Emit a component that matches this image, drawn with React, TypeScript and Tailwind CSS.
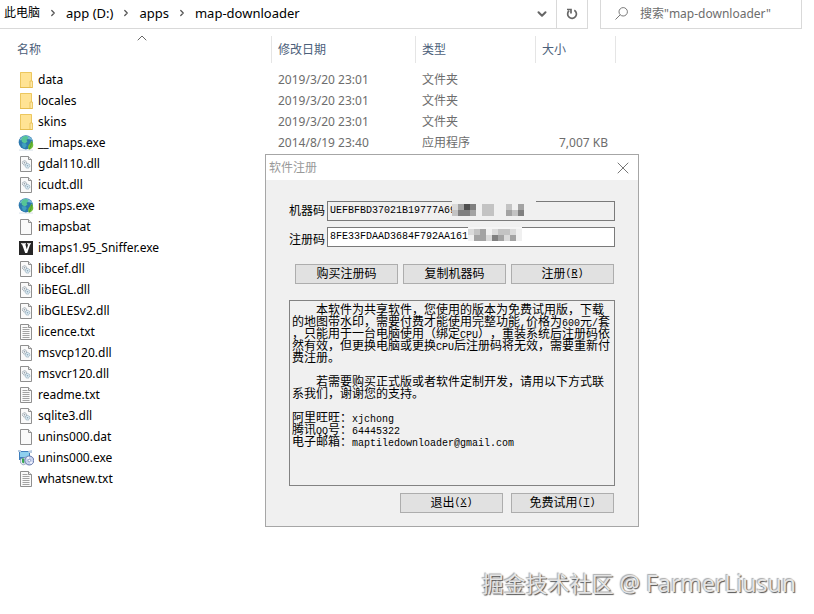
import { Fragment, type ReactNode } from "react";
import { ChevronDown, ChevronRight, ChevronUp, X } from "lucide-react";

type Kind = "folder" | "globe" | "dll" | "blank" | "text" | "sniffer" | "setup";

type FileRow = {
    name: string;
    kind: Kind;
    date?: string;
    type?: string;
    size?: string;
};

const files: FileRow[] = [
    { name: "data", kind: "folder", date: "2019/3/20 23:01", type: "文件夹" },
    { name: "locales", kind: "folder", date: "2019/3/20 23:01", type: "文件夹" },
    { name: "skins", kind: "folder", date: "2019/3/20 23:01", type: "文件夹" },
    { name: "__imaps.exe", kind: "globe", date: "2014/8/19 23:40", type: "应用程序", size: "7,007 KB" },
    { name: "gdal110.dll", kind: "dll" },
    { name: "icudt.dll", kind: "dll" },
    { name: "imaps.exe", kind: "globe" },
    { name: "imapsbat", kind: "blank" },
    { name: "imaps1.95_Sniffer.exe", kind: "sniffer" },
    { name: "libcef.dll", kind: "dll" },
    { name: "libEGL.dll", kind: "dll" },
    { name: "libGLESv2.dll", kind: "dll" },
    { name: "licence.txt", kind: "text" },
    { name: "msvcp120.dll", kind: "dll" },
    { name: "msvcr120.dll", kind: "dll" },
    { name: "readme.txt", kind: "text" },
    { name: "sqlite3.dll", kind: "dll" },
    { name: "unins000.dat", kind: "blank" },
    { name: "unins000.exe", kind: "setup" },
    { name: "whatsnew.txt", kind: "text" },
];

const crumbs = ["app (D:)", "apps", "map-downloader"];

function Page({ children }: { children?: ReactNode }) {
    return (
        <>
            <path d="M2.5 .5h8l3 3v12h-11z" fill="#fafafa" stroke="#8f8f8f" />
            <path d="M10.5 .5v3h3" fill="#e8e8e8" stroke="#8f8f8f" />
            {children}
        </>
    );
}

function FileIcon({ kind }: { kind: Kind }) {
    return (
        <svg viewBox="0 0 16 16" className="size-4 shrink-0" aria-hidden="true">
            {kind === "folder" && (
                <>
                    <path d="M2 0h11.5v16H2z" fill="#ffe394" />
                    <path d="M2.5 .5h11v8.5M2.5 .5v15" fill="none" stroke="#ecc75f" />
                    <path d="M12 9h2.5v6.5H12z" fill="#ffe9a8" stroke="#e5bd50" strokeWidth=".8" />
                    <path d="M2 15.5h12.5" stroke="#e5bd50" />
                </>
            )}
            {kind === "globe" && (
                <>
                    <path d="M1 14.5h14v1.2H1z" fill="#dfe5ec" />
                    <circle cx="7.8" cy="7.3" r="7.1" fill="#2c78ae" />
                    <path d="M1.5 5.5Q3 .8 8 .8q5 .3 6.4 4.5Q8 2.5 1.5 5.5z" fill="#79b8d8" />
                    <path d="M5.5 1.2 9 1l1.5 2-2 2 1 1.6-2.5 1.8L4 7 3.2 4z" fill="#56c596" />
                    <path d="M3.5 8.5 7 8l1.8 2-2 3.5-2-1.2z" fill="#3e9fbd" />
                    <path d="M13.5 5.5q3 4 1 7-1.5 2-3.5 2.2-2-2.5 .3-5.5 1.5-1.5 2.2-3.7z" fill="#70bd38" />
                    <path d="M13.6 7q-.5 4-2.4 7.2" fill="none" stroke="#3f8e26" strokeWidth=".7" />
                </>
            )}
            {kind === "dll" && (
                <Page>
                    <circle cx="6.5" cy="6.8" r="2.1" fill="#e9edf0" stroke="#909aa3" strokeWidth=".9" strokeDasharray="1.2 .4" />
                    <circle cx="6.5" cy="6.8" r=".7" fill="#909aa3" />
                    <circle cx="9.5" cy="9.8" r="2.3" fill="#dceaf2" stroke="#8ba6b7" strokeWidth=".9" strokeDasharray="1.2 .4" />
                    <circle cx="9.5" cy="9.8" r=".8" fill="#8ba6b7" />
                </Page>
            )}
            {kind === "blank" && <Page />}
            {kind === "text" && (
                <Page>
                    <path d="M4.5 3.5h5M4.5 5.5h7M4.5 7.5h7M4.5 9.5h7M4.5 11.5h7M4.5 13.5h7" stroke="#a3a3a3" />
                </Page>
            )}
            {kind === "sniffer" && (
                <>
                    <path d="M1 1h14v14H1z" fill="#262626" />
                    <path d="M3 3.2h5v1H7.3l1.5 5 1.4-5H9v-1h4v1h-.8L9.2 13H7.2L4 4.2H3z" fill="#fff" />
                </>
            )}
            {kind === "setup" && (
                <>
                    <path d="M1 1h11v9H1z" fill="#3f7fbd" />
                    <path d="M2 2h9v5H2z" fill="#8fd0ee" />
                    <path d="M0 0h3v2H0zM10 1l4-1v3h-3z" fill="#b8cbe0" />
                    <path d="M2.5 9 8 7l2 6-5 2-2.5-2z" fill="#e4e9f2" stroke="#7485a8" strokeWidth=".6" />
                    <path d="M4 8.5h2.2v5L4 12.5z" fill="#38a852" />
                    <circle cx="11.3" cy="10.5" r="4.5" fill="#c9d3ef" stroke="#566aa0" strokeWidth=".9" />
                    <path d="M11.3 10.5 8.5 7.5l2.5-1zM11.3 10.5l3.5 2-2 1.7z" fill="#f5f7ff" />
                    <circle cx="11.3" cy="10.5" r="1.3" fill="#fff" stroke="#7185b6" strokeWidth=".7" />
                </>
            )}
        </svg>
    );
}

function AddressBar() {
    return (
        <header className="flex h-[29px] pr-3">
            <div className="flex min-w-0 flex-1 border-r border-b border-[#d9d9d9]">
                <nav className="flex flex-1 items-center gap-2 pb-[3px] pl-1 text-[13px] leading-5 text-black">
                    <a href="#pc" className="text-xs leading-5">此电脑</a>
                    {crumbs.map((crumb) => (
                        <Fragment key={crumb}>
                            <ChevronRight className="size-2.5 text-[#555]" strokeWidth={3} />
                            <a href={"#" + crumb}>{crumb}</a>
                        </Fragment>
                    ))}
                </nav>
                <button aria-label="历史记录" className="flex w-7 items-center justify-center text-[#666]">
                    <ChevronDown className="size-3.5" strokeWidth={3.5} />
                </button>
                <button aria-label="刷新" className="flex w-[31px] items-center justify-center border-l border-[#d9d9d9]">
                    <svg viewBox="0 0 12 12" className="size-3" fill="none" stroke="#666" strokeWidth="1.7" aria-hidden="true">
                        <path d="M8.3 2.2a4.4 4.4 0 1 1-5.2 .5" />
                        <path d="M1 1.5h4v4" />
                    </svg>
                </button>
            </div>
            <label className="ml-3 flex w-[202px] items-center border-x border-b border-[#d9d9d9] pl-3.5">
                <svg viewBox="0 0 13 13" className="mb-0.5 size-[13px] shrink-0" fill="none" stroke="#777" aria-hidden="true">
                    <circle cx="8.2" cy="4.8" r="4.2" />
                    <path d="M5.2 7.8.5 12.5" />
                </svg>
                <input
                    aria-label="搜索"
                    placeholder='搜索"map-downloader"'
                    className="ml-3 w-full min-w-0 text-xs outline-none placeholder:text-[#6d6d6d]"
                />
            </label>
        </header>
    );
}

function FileTable() {
    return (
        <table className="mt-[7px] w-[616px] table-fixed border-separate border-spacing-0 text-left text-xs text-[#6d6d6d]">
            <colgroup>
                <col className="w-[272px]" />
                <col className="w-36" />
                <col className="w-[120px]" />
                <col className="w-20" />
            </colgroup>
            <thead>
                <tr className="h-[27px] text-[#4c607a]">
                    <th className="relative border-r border-[#e5e5e5] p-0 pl-[17px] font-normal">
                        名称
                        <ChevronUp className="absolute -top-1.5 left-[134px] size-4 text-[#666]" strokeWidth={1.5} />
                    </th>
                    <th className="border-r border-[#e5e5e5] p-0 pl-1.5 font-normal">修改日期</th>
                    <th className="border-r border-[#e5e5e5] p-0 pl-1.5 font-normal">类型</th>
                    <th className="border-r border-[#e5e5e5] p-0 pl-1.5 font-normal">大小</th>
                </tr>
            </thead>
            <tbody>
                <tr className="h-1.5" aria-hidden="true" />
                {files.map((file) => (
                    <tr key={file.name} className="h-[21px]">
                        <td className="p-0 pl-[18px]">
                            <div className="flex items-center gap-1 leading-4 text-black">
                                <FileIcon kind={file.kind} />
                                {file.name}
                            </div>
                        </td>
                        <td className="p-0 pl-1.5">{file.date}</td>
                        <td className="p-0 pl-1.5">{file.type}</td>
                        <td className="p-0 pr-2 text-right">{file.size}</td>
                    </tr>
                ))}
            </tbody>
        </table>
    );
}

/* half-width characters: 6px each, half of a Chinese character */
function Half({ children }: { children: ReactNode }) {
    return <span className="font-['Liberation_Mono',monospace] text-[10px] leading-2">{children}</span>;
}

function DialogButton({ label, hotkey }: { label: string; hotkey?: string }) {
    return (
        <button className="flex h-5 w-[103px] items-center justify-center border border-[#adadad] bg-[#e1e1e1] leading-4 text-black">
            {label}
            {hotkey && (
                <Half>
                    (<u>{hotkey}</u>)
                </Half>
            )}
        </button>
    );
}

/* each string is a row of grey blocks, 0 = lightest */
const shades = ["#f0f0f0", "#dadada", "#c3c3c3", "#a3a3a3", "#808080", "#4f4f4f"];

function Mosaic({ rows, className }: { rows: string[]; className: string }) {
    const cols = rows[0].length;
    return (
        <svg viewBox={`0 0 ${cols * 6} ${rows.length * 6}`} className={className} aria-hidden="true" shapeRendering="crispEdges">
            {rows.map((row, y) =>
                [...row].map((c, x) => (
                    <rect key={x + "-" + y} x={x * 6} y={y * 6} width="6" height="6" fill={shades[Number(c)]} />
                ))
            )}
        </svg>
    );
}

function RegisterDialog() {
    return (
        <section
            role="dialog"
            aria-label="软件注册"
            className="absolute top-[154px] left-[265px] w-[374px] border border-[#a6a6a6] bg-[#f0f0f0] text-xs text-black"
        >
            <div className="flex h-[25px] items-center justify-between bg-white pr-[5px] pl-[3px] text-[#999]">
                <span>软件注册</span>
                <button aria-label="关闭">
                    <X className="size-5 text-[#777]" strokeWidth={1.2} />
                </button>
            </div>

            <div className="flex flex-col px-[23px] pt-[21px] pb-[13px]">
                <div className="relative flex h-5 items-center gap-0.5">
                    <label htmlFor="machine" className="shrink-0">机器码</label>
                    <input
                        id="machine"
                        readOnly
                        defaultValue="UEFBFBD37021B19777A69"
                        className="h-5 w-full min-w-0 border border-[#7a7a7a] bg-[#f0f0f0] px-0.5 pb-0.5 font-['Liberation_Mono',monospace] text-[10px] outline-none"
                    />
                    <span className="absolute top-0 left-[163px] h-[3px] w-[84px] bg-[#f0f0f0]" />
                    <Mosaic
                        rows={["135402200203", "244302200324"]}
                        className="absolute top-[3px] left-[163px] h-3 w-[72px]"
                    />
                </div>
                <div className="relative mt-1.5 flex h-5 items-center gap-0.5">
                    <label htmlFor="code" className="shrink-0 pt-1.5">注册码</label>
                    <input
                        id="code"
                        defaultValue="8FE33FDAAD3684F792AA161"
                        className="h-5 w-full min-w-0 border border-[#7a7a7a] bg-white px-0.5 pb-0.5 font-['Liberation_Mono',monospace] text-[10px] outline-none"
                    />
                    <span className="absolute top-0 left-[179px] h-0.5 w-[54px] bg-[#f5f5f5]" />
                    <Mosaic
                        rows={["123012210", "033143130"]}
                        className="absolute top-0.5 left-[179px] h-3 w-[54px]"
                    />
                </div>

                <div className="mt-[17px] flex justify-end gap-[5px] pr-px">
                    <DialogButton label="购买注册码" />
                    <DialogButton label="复制机器码" />
                    <DialogButton label="注册" hotkey="R" />
                </div>

                <div className="mt-4 flex h-[186px] flex-col gap-3 border border-[#828282] px-0.5 pt-[3px] leading-3 whitespace-nowrap [text-spacing-trim:space-all]">
                    <p className="indent-6">
                        本软件为共享软件，您使用的版本为免费试用版，下载
                        <br />
                        的地图带水印，需要付费才能使用完整功能<Half>,</Half>价格为<Half>600</Half>元<Half>/</Half>套
                        <br />
                        ，只能用于一台电脑使用（绑定<Half>CPU</Half>），重装系统后注册码依
                        <br />
                        然有效，但更换电脑或更换<Half>CPU</Half>后注册码将无效，需要重新付
                        <br />
                        费注册。
                    </p>
                    <p className="indent-6">
                        若需要购买正式版或者软件定制开发，请用以下方式联
                        <br />
                        系我们，谢谢您的支持。
                    </p>
                    <p>
                        阿里旺旺：<Half>xjchong</Half>
                        <br />
                        腾讯<Half>QQ</Half>号：<Half>64445322</Half>
                        <br />
                        电子邮箱：<Half>maptiledownloader@gmail.com</Half>
                    </p>
                </div>

                <div className="mt-[7px] flex justify-end gap-2 pr-px">
                    <DialogButton label="退出" hotkey="X" />
                    <DialogButton label="免费试用" hotkey="T" />
                </div>
            </div>
        </section>
    );
}

export default function App() {
    return (
        <main className="relative min-h-screen bg-white font-['Noto_Sans','Noto_Sans_CJK_SC',sans-serif]">
            <AddressBar />
            <FileTable />
            <RegisterDialog />
            <p className="absolute right-[18px] bottom-3.5 text-[22px] text-[#e4e4e4] [text-shadow:1px_1px_1px_#555,-1px_-1px_1px_#aaa]">
                掘金技术社区 <span className="text-[23px]">@ FarmerLiusun</span>
            </p>
        </main>
    );
}
